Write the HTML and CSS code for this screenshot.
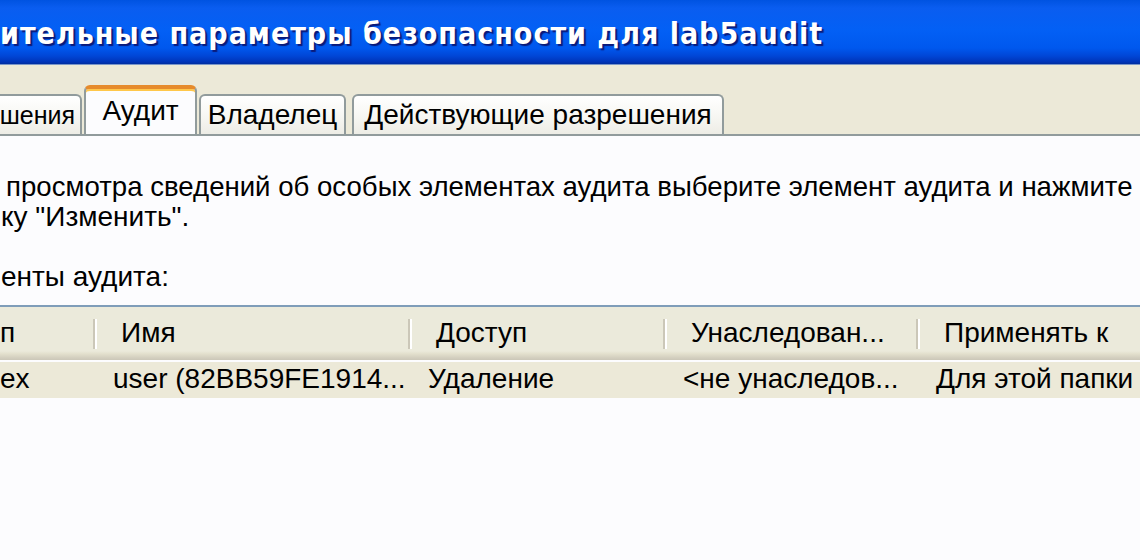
FILE: index.html
```html
<!DOCTYPE html>
<html lang="ru">
<head>
<meta charset="utf-8">
<title>Дополнительные параметры безопасности для lab5audit</title>
<link rel="stylesheet" href="styles.css">
</head>
<body>
<div class="window">
  <div class="titlebar">
    <span class="title">ительные параметры безопасности для lab5audit</span>
  </div>
  <div class="tabstrip">
    <div class="tab tab-first"><span>шения</span></div>
    <div class="tab tab-active">Аудит</div>
    <div class="tab tab-owner">Владелец</div>
    <div class="tab tab-eff">Действующие разрешения</div>
  </div>
  <div class="panel">
    <p class="line line1">просмотра сведений об особых элементах аудита выберите элемент аудита и нажмите</p>
    <p class="line line2">ку "Изменить".</p>
    <p class="line line3">енты аудита:</p>
    <div class="listview">
      <div class="lv-head">
        <div class="hcell hc1">п</div>
        <div class="hcell">Имя</div>
        <div class="hcell">Доступ</div>
        <div class="hcell">Унаследован...</div>
        <div class="hcell">Применять к</div>
      </div>
      <div class="lv-row">
        <div class="rcell rc1">ex</div>
        <div class="rcell">user (82BB59FE1914...</div>
        <div class="rcell">Удаление</div>
        <div class="rcell">&lt;не унаследов...</div>
        <div class="rcell">Для этой папки</div>
      </div>
    </div>
  </div>
</div>
</body>
</html>
```

FILE: styles.css
```css
html, body {
  margin: 0;
  padding: 0;
  background: #fcfcfe;
}
body {
  width: 1140px;
  height: 560px;
  overflow: hidden;
  font-family: "Liberation Sans", Arial, sans-serif;
  color: #000;
}
.window {
  width: 1140px;
}
.titlebar {
  height: 64px;
  box-sizing: border-box;
  background: linear-gradient(to bottom, #0053e1 0px, #0a5df0 8px, #0360f5 30px, #0058ee 48px, #0046d6 56px, #0034b8 62px, #002e9e 64px);
  display: flex;
  align-items: flex-end;
  padding-bottom: 15px;
  white-space: nowrap;
  overflow: hidden;
}
.title {
  font-family: "DejaVu Sans Condensed", "DejaVu Sans", sans-serif;
  font-stretch: condensed;
  font-weight: bold;
  font-size: 30px;
  letter-spacing: 1px;
  color: #fff;
  text-shadow: 2px 2px 1px #0a1a7a;
  line-height: 1;
  margin-left: 0;
}
.tabstrip {
  height: 72px;
  box-sizing: border-box;
  background: #ece9d8;
  border-top: 1px solid #7a96c9;
  border-bottom: 2px solid #919b9c;
  display: flex;
  align-items: flex-end;
  white-space: nowrap;
  overflow: hidden;
}
.tab {
  box-sizing: border-box;
  height: 42px;
  margin-bottom: -2px;
  border: 2px solid #919b9c;
  border-bottom: none;
  border-radius: 6px 6px 0 0;
  background: linear-gradient(to bottom, #ffffff 0%, #f7f7f3 50%, #ecebe4 100%);
  font-size: 28px;
  line-height: 38px;
  text-align: center;
  color: #000;
}
.tab-first {
  width: 82px;
  margin-left: 0;
  display: flex;
  justify-content: flex-end;
  padding-right: 5px;
  font-size: 25px;
  border-left: none;
  border-radius: 0 6px 0 0;
}
.tab-active {
  width: 113px;
  height: 51px;
  margin-left: 2px;
  margin-bottom: -2px;
  background: #fcfcfe;
  border-top: 4px solid #f4a328;
  box-shadow: inset 0 2px 0 #ffc74a;
  border-color: #919b9c;
  border-top-color: #e68b2c;
  line-height: 44px;
  padding-bottom: 3px;
  position: relative;
  z-index: 1;
}
.tab-owner {
  width: 147px;
  margin-left: 2px;
}
.tab-eff {
  width: 372px;
  margin-left: 6px;
}
.panel {
  background: #fcfcfe;
  padding-top: 0;
}
.line {
  margin: 0;
  font-size: 28px;
  line-height: 30px;
  white-space: nowrap;
  padding-left: 1px;
}
.line1 {
  padding-top: 36px;
  padding-left: 6px;
  font-size: 27.6px;
}
.line3 {
  padding-top: 30px;
}
.listview {
  margin-top: 13px;
  border-top: 2px solid #7f9db9;
}
.lv-head,
.lv-row {
  display: grid;
  grid-template-columns: 95px 315px 255px 253px 1fr;
  white-space: nowrap;
}
.lv-head {
  height: 53px;
  background: linear-gradient(to bottom, #ebeadb 0px, #ebeadb 44px, #e2dfcc 47px, #d6d2c2 50px, #cbc7b8 53px);
}
.hcell {
  font-size: 28px;
  line-height: 52px;
  padding-left: 26px;
  position: relative;
}
.hcell::before {
  content: "";
  position: absolute;
  left: -2px;
  top: 12px;
  height: 30px;
  width: 2px;
  background: #cbc7b8;
  box-shadow: 2px 0 0 #fff;
}
.hc1 {
  padding-left: 0;
}
.hc1::before {
  display: none;
}
.lv-row {
  height: 36px;
  margin-top: 2px;
  background: #ece9d8;
}
.rcell {
  font-size: 28px;
  line-height: 34px;
  padding-left: 18px;
  overflow: hidden;
}
.rc1 {
  padding-left: 0;
}
```
